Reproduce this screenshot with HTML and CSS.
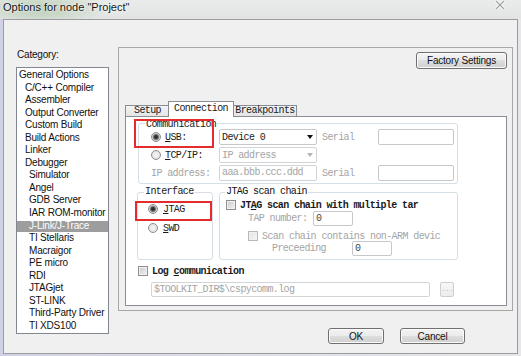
FILE: index.html
```html
<!DOCTYPE html>
<html>
<head>
<meta charset="utf-8">
<title>Options for node "Project"</title>
<link rel="stylesheet" href="styles.css">
</head>
<body>
<div class="titlebar">
  <span class="title">Options for node "Project"</span>
  <svg class="close" width="12" height="10" viewBox="0 0 12 10"><path d="M2 1 L10 9 M10 1 L2 9" stroke="#fbfbfb" stroke-width="3"/><path d="M2 1 L10 9 M10 1 L2 9" stroke="#a2a2a2" stroke-width="1.2"/></svg>
</div>
<div class="client">
  <div class="leftcol">
    <div class="catlabel">Category:</div>
    <ul class="catlist">
      <li class="l0">General Options</li>
      <li class="l1">C/C++ Compiler</li>
      <li class="l1">Assembler</li>
      <li class="l1">Output Converter</li>
      <li class="l1">Custom Build</li>
      <li class="l1">Build Actions</li>
      <li class="l1">Linker</li>
      <li class="l1">Debugger</li>
      <li class="l2">Simulator</li>
      <li class="l2">Angel</li>
      <li class="l2">GDB Server</li>
      <li class="l2">IAR ROM-monitor</li>
      <li class="l2 sel">J-Link/J-Trace</li>
      <li class="l2">TI Stellaris</li>
      <li class="l2">Macraigor</li>
      <li class="l2">PE micro</li>
      <li class="l2">RDI</li>
      <li class="l2">JTAGjet</li>
      <li class="l2">ST-LINK</li>
      <li class="l2">Third-Party Driver</li>
      <li class="l2">TI XDS100</li>
    </ul>
  </div>
  <div class="rightcol">
    <div class="frame">
      <div class="factory-row"><div class="btn factory">Factory Settings</div></div>
      <div class="tabs mono">
        <div class="tab t-setup">Setup</div>
        <div class="tab active t-conn">Connection</div>
        <div class="tab t-bp">Breakpoints</div>
      </div>
      <div class="page mono">
        <fieldset class="comm">
          <legend>Communication</legend>
          <div class="comm-grid">
            <div class="opt"><span class="radio on"></span><span><u>U</u>SB:</span></div>
            <div class="combo"><span>Device 0</span><span class="arrow"></span></div>
            <span class="lbl dis">Serial</span>
            <div class="field"></div>
            <div class="opt"><span class="radio"></span><span><u>T</u>CP/IP:</span></div>
            <div class="combo dis"><span>IP address</span><span class="arrow grey"></span></div>
            <span></span>
            <span></span>
            <span class="ipl dis">IP address:</span>
            <div class="field dis">aaa.bbb.ccc.ddd</div>
            <span class="lbl dis">Serial</span>
            <div class="field"></div>
          </div>
        </fieldset>
        <div class="midrow">
          <fieldset class="iface">
            <legend>Interface</legend>
            <div class="iface-body">
              <div class="opt"><span class="radio on"></span><span><u>J</u>TAG</span></div>
              <div class="opt"><span class="radio"></span><span><u>S</u>WD</span></div>
            </div>
          </fieldset>
          <fieldset class="jtag">
            <legend>JTAG scan chain</legend>
            <div class="jrow1"><span class="chk"></span><span class="b nowrap">JT<u>A</u>G scan chain with multiple tar</span></div>
            <div class="jrow2"><span class="dis jl2">TAP number:</span><div class="field small">0</div></div>
            <div class="jrow3"><span class="chk dis"></span><span class="dis nowrap">Scan chain contains non-ARM devic</span></div>
            <div class="jrow4"><span class="dis jl4">Preceeding</span><div class="field small">0</div></div>
          </fieldset>
        </div>
        <div class="logrow"><span class="chk"></span><span class="b">Log <u>c</u>ommunication</span></div>
        <div class="filerow"><div class="field dis fpath">$TOOLKIT_DIR$\cspycomm.log</div><div class="browse">...</div></div>
        <div class="mark mark1"></div>
        <div class="mark mark2"></div>
      </div>
    </div>
    <div class="okrow">
      <div class="btn ok">OK</div>
      <div class="btn cancel">Cancel</div>
    </div>
  </div>
</div>
</body>
</html>
```

FILE: styles.css
```css
* { box-sizing: border-box; }
html, body { margin: 0; padding: 0; }
body {
  width: 521px;
  height: 356px;
  overflow: hidden;
  background: linear-gradient(90deg, #cfd1e6 0, #dcdde9 40%, #e7e7ea 100%);
  font-family: "Liberation Sans", Arial, sans-serif;
  color: #111;
}

/* title bar */
.titlebar {
  height: 19px;
  display: flex;
  align-items: flex-start;
  justify-content: space-between;
  padding: 0 15px 0 3px;
  background:
    radial-gradient(ellipse 70px 16px at 40px 8px, rgba(118, 168, 108, 0.45), rgba(118, 168, 108, 0)),
    linear-gradient(#eaeceb, #e2e4e3);
}
.title {
  font-size: 11px;
  line-height: 14px;
  color: #151515;
  text-shadow: 0 0 5px #fff, 0 0 2px #fff;
}
.close { display: block; }

/* client area */
.client {
  margin-left: 3px;
  width: 515px;
  height: 335px;
  border: 1px solid #9c9c9c;
  background: #f0f0f0;
  display: flex;
}

.leftcol {
  margin-left: 12px;
  padding-top: 29px;
  display: flex;
  flex-direction: column;
}
.catlabel {
  font-size: 10px;
  line-height: 12px;
  height: 12px;
  padding-left: 1px;
  letter-spacing: -0.2px;
}
.catlist {
  margin: 6px 0 0;
  padding: 1px 0 0;
  list-style: none;
  width: 93px;
  height: 267px;
  border: 1px solid #828790;
  background: #fff;
  font-size: 10px;
  letter-spacing: -0.2px;
}
.catlist li {
  height: 12.55px;
  line-height: 12.55px;
  white-space: nowrap;
  color: #111;
}
.catlist .l0 { padding-left: 2px; }
.catlist .l1 { padding-left: 8px; }
.catlist .l2 { padding-left: 12px; }
.catlist .sel {
  background: linear-gradient(transparent 0, transparent 1px, #9d9d9d 1px, #9d9d9d 11.5px, transparent 11.5px);
  color: #fff;
}

.rightcol {
  margin-left: 9px;
  display: flex;
  flex-direction: column;
}
.frame {
  margin-top: 27px;
  width: 395px;
  height: 264px;
  border: 1px solid #a8a8a8;
  padding: 4px 5px 0 6px;
  display: flex;
  flex-direction: column;
}
.factory-row { display: flex; justify-content: flex-end; }

.btn {
  border: 1px solid #707070;
  border-radius: 3px;
  background: linear-gradient(#f3f3f3 0, #ebebeb 50%, #dedede 50%, #d0d0d0 100%);
  box-shadow: inset 0 0 0 1px #fbfbfb;
  font-family: "Liberation Sans", Arial, sans-serif;
  font-size: 10px;
  letter-spacing: -0.2px;
  color: #111;
  display: flex;
  align-items: center;
  justify-content: center;
}
.factory { width: 91px; height: 17px; }

/* tabs */
.mono {
  font-family: "Liberation Mono", "DejaVu Sans Mono", monospace;
  font-size: 10px;
  letter-spacing: -0.6px;
  color: #1a1a1a;
}
.dis { color: #a4a4a4; }
u { text-decoration: underline; text-underline-offset: 1px; }
.b { font-weight: bold; }
.nowrap { white-space: nowrap; }

.tabs {
  display: flex;
  align-items: flex-end;
  height: 15px;
  margin-top: 32px;
}
.tab {
  height: 11px;
  border: 1px solid #898c95;
  border-bottom: 0;
  background: linear-gradient(#f4f4f4, #e4e4e4);
  line-height: 10px;
  text-align: center;
}
.t-setup { width: 45px; }
.t-conn { width: 66px; }
.t-bp { width: 64px; }
.tab.active {
  height: 16px;
  margin: 0 -1px -1px -2px;
  background: #fff;
  line-height: 13px;
  z-index: 1;
}

.page {
  width: 382px;
  height: 190px;
  border: 1px solid #898c95;
  background: #fff;
  position: relative;
}

fieldset {
  margin: 0;
  padding: 0;
  min-width: 0;
  border: 1px solid #d5dfe5;
  border-radius: 3px;
}
legend {
  padding: 0 1px;
  margin-left: 6px;
  line-height: 10px;
  height: 10px;
}

.comm {
  margin: 1px 0 0 12px;
  width: 320px;
}
.comm legend { line-height: 13px; }
.comm-grid {
  display: grid;
  grid-template-columns: 68px 98px 61px 76px;
  grid-template-rows: 16px 16px 16px;
  row-gap: 2px;
  padding: 1px 0 2px 12px;
  align-items: center;
}
.opt { display: flex; align-items: center; gap: 4px; }
.radio {
  width: 10px;
  height: 10px;
  flex: none;
  border-radius: 50%;
  border: 1px solid #8d8e8f;
  background: radial-gradient(circle, #f6f6f6 0, #e6e6e6 60%, #d2d2d2 100%);
}
.radio.on {
  background: radial-gradient(circle, #262626 0, #3c3c3c 1.6px, #7a7a7a 2.6px, #cfcfcf 3.6px, #ececec 100%);
}
.combo, .field {
  height: 16px;
  border: 1px solid #c6c8cc;
  border-radius: 2px;
  background: #fff;
}
.combo {
  display: flex;
  align-items: center;
  justify-content: space-between;
  padding: 0 3px 0 2px;
}
.combo.dis { border-color: #d2d4d8; }
.arrow {
  width: 0;
  height: 0;
  border-left: 3.5px solid transparent;
  border-right: 3.5px solid transparent;
  border-top: 4px solid #111;
}
.arrow.grey { border-top-color: #b5b5b5; }
.field {
  padding-left: 2px;
  line-height: 14px;
  white-space: nowrap;
  overflow: hidden;
}
.field.dis { border-color: #d2d4d8; }
.lbl { padding-left: 5px; }
.ipl { white-space: nowrap; }

.midrow {
  display: flex;
  align-items: stretch;
  margin-top: 3px;
}
.iface {
  margin-left: 11px;
  width: 76px;
}
.iface-body {
  padding: 5px 0 0 10px;
  display: flex;
  flex-direction: column;
  gap: 5px;
}
.iface-body .opt { height: 14px; gap: 5px; }

.jtag {
  margin-left: 6px;
  width: 239px;
  padding-bottom: 3px;
}
.jtag legend { margin-left: 5px; color: #111; }
.jrow1 {
  margin-top: 2px;
  height: 12px;
  padding-left: 6px;
  display: flex;
  align-items: center;
  gap: 4px;
}
.jrow2 {
  height: 15px;
  padding-left: 28px;
  display: flex;
  align-items: center;
}
.jl2 { width: 65px; white-space: nowrap; }
.field.small { width: 40px; height: 15px; line-height: 13px; color: #444; }
.jrow3 {
  margin-top: 4px;
  height: 12px;
  padding-left: 28px;
  display: flex;
  align-items: center;
  gap: 4px;
}
.jrow4 {
  margin-top: -1px;
  height: 15px;
  padding-left: 52px;
  display: flex;
  align-items: center;
}
.jl4 { width: 80px; white-space: nowrap; }

.chk {
  width: 10px;
  height: 10px;
  flex: none;
  border: 1px solid #8e8f8f;
  background: linear-gradient(135deg, #c9c9c9, #f3f3f3);
  box-shadow: inset 0 0 0 1px #f1f1f1;
}
.chk.dis {
  border-color: #b9b9b9;
  background: linear-gradient(135deg, #e2e2e2, #f6f6f6);
}

.logrow {
  margin-top: 5px;
  height: 12px;
  padding-left: 12px;
  display: flex;
  align-items: center;
  gap: 4px;
}
.filerow {
  margin-top: 5px;
  padding-left: 25px;
  display: flex;
  gap: 10px;
}
.fpath { width: 279px; height: 15px; line-height: 13px; }
.browse {
  width: 14px;
  height: 15px;
  border: 1px solid #cfcfcf;
  border-radius: 2px;
  background: linear-gradient(#f7f7f7, #ececec);
  color: #b8b8b8;
  font-size: 8px;
  line-height: 11px;
  text-align: center;
  letter-spacing: -1px;
}

.mark {
  position: absolute;
  border: 2px solid #e42c2c;
}
.mark1 { left: 8px; top: 2px; width: 80px; height: 29px; }
.mark2 { left: 9px; top: 84px; width: 77px; height: 20px; }

.okrow {
  margin-top: 17px;
  display: flex;
  justify-content: flex-end;
  gap: 16px;
  padding-right: 48px;
}
.ok { width: 56px; height: 16px; }
.cancel { width: 65px; height: 16px; }
```
